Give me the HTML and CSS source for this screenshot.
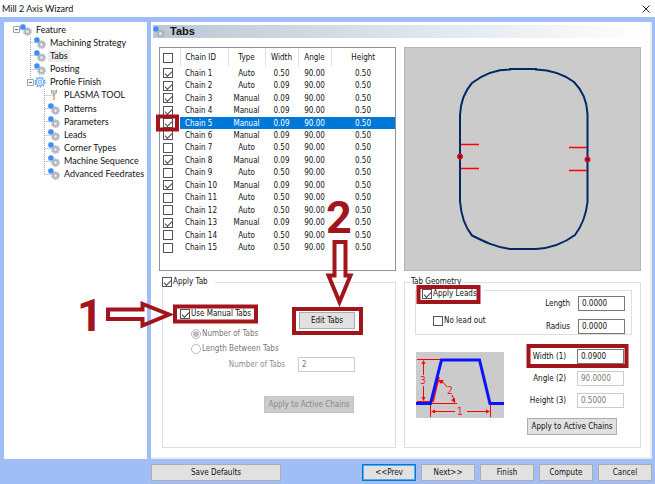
FILE: index.html
```html
<!DOCTYPE html>
<html lang="en">
<head>
<meta charset="utf-8">
<title>Mill 2 Axis Wizard</title>
<link rel="stylesheet" href="styles.css">
</head>
<body>
<svg class="defs" aria-hidden="true">
  <symbol id="gears" viewBox="0 0 12 12">
    <circle cx="7.500" cy="7.600" r="3.700" fill="none" stroke="#b3b7c0" stroke-width="1.400" stroke-dasharray="1.500 .8"/>
    <circle cx="7.500" cy="7.600" r="2.400" fill="#e4e6ec" stroke="#adb1bc" stroke-width="1.700"/>
    <circle cx="2.900" cy="2.900" r="2.700" fill="#3f8cf4"/>
    <circle cx="2.900" cy="2.900" r="2.600" fill="none" stroke="#6aa8fa" stroke-width=".8" stroke-dasharray="1 .8"/>
  </symbol>
  <symbol id="gear" viewBox="0 0 12 12">
    <circle cx="6" cy="6" r="4.900" fill="none" stroke="#5aa2ee" stroke-width="1.400" stroke-dasharray="1.600 1.480"/>
    <circle cx="6" cy="6" r="3.800" fill="#e8f3ff" stroke="#62a8f0" stroke-width="1"/>
    <circle cx="6" cy="6" r="1.600" fill="#fff" stroke="#62a8f0" stroke-width=".9"/>
  </symbol>
  <symbol id="torch" viewBox="0 0 12 12">
    <path d="M3.500 1v2.500L5 5.500h2l1.500-2V1M5 1v3h2V1" fill="none" stroke="#9a9a9a" stroke-width="1"/>
    <path d="M6 5.500V11" stroke="#e9a154" stroke-width="1.600"/>
  </symbol>
</svg>
<header class="titlebar">
  <h1>Mill 2 Axis Wizard</h1>
  <button class="close" aria-label="Close"><svg viewBox="0 0 8 8"><path d="M.5.5l7 7M7.500.5l-7 7" stroke="#222" fill="none"/></svg></button>
</header>
<div class="frame">
  <nav class="tree" aria-label="Steps">
    <svg class="lines" viewBox="0 0 60 158" aria-hidden="true">
      <g fill="none" stroke="#a8a8a8" stroke-dasharray="1 1">
        <path d="M12 6.500h8M22.500 14v46M22.500 19.500h9M22.500 32.500h9M22.500 46.500h9M27 59.500h6M36.500 66v86M36.500 72.500h9M36.500 85.500h9M36.500 98.500h9M36.500 112.500h9M36.500 125.500h9M36.500 138.500h9M36.500 151.500h9"/>
      </g>
      <g fill="#fff" stroke="#a2a2a2"><path d="M5.500 3.500h6v6h-6zM19.500 56.500h6v6h-6z"/></g>
      <path d="M7 6.500h3M21 59.500h3" stroke="#4668a8"/>
    </svg>
    <ul>
      <li class="level-0"><svg><use href="#gears"/></svg><span>Feature</span></li>
      <li class="level-1"><svg><use href="#gears"/></svg><span>Machining Strategy</span></li>
      <li class="level-1"><svg><use href="#gears"/></svg><span class="current">Tabs</span></li>
      <li class="level-1"><svg><use href="#gears"/></svg><span>Posting</span></li>
      <li class="level-1"><svg><use href="#gear"/></svg><span>Profile Finish</span></li>
      <li class="level-2"><svg><use href="#torch"/></svg><span>PLASMA TOOL</span></li>
      <li class="level-2"><svg><use href="#gears"/></svg><span>Patterns</span></li>
      <li class="level-2"><svg><use href="#gears"/></svg><span>Parameters</span></li>
      <li class="level-2"><svg><use href="#gears"/></svg><span>Leads</span></li>
      <li class="level-2"><svg><use href="#gears"/></svg><span>Corner Types</span></li>
      <li class="level-2"><svg><use href="#gears"/></svg><span>Machine Sequence</span></li>
      <li class="level-2"><svg><use href="#gears"/></svg><span>Advanced Feedrates</span></li>
    </ul>
  </nav>
  <main class="page">
    <h2><svg><use href="#gears"/></svg>Tabs</h2>
    <div class="content">
      <div class="list">
        <table>
          <colgroup><col class="c-check"><col class="c-id"><col class="c-type"><col class="c-width"><col class="c-angle"><col></colgroup>
          <thead><tr><th><input type="checkbox" aria-label="Select all"></th><th>Chain ID</th><th>Type</th><th>Width</th><th>Angle</th><th>Height</th></tr></thead>
          <tbody>
            <tr><td><input type="checkbox" aria-label="Chain 1" checked></td><td>Chain 1</td><td>Auto</td><td>0.50</td><td>90.00</td><td>0.50</td></tr>
            <tr><td><input type="checkbox" aria-label="Chain 2" checked></td><td>Chain 2</td><td>Auto</td><td>0.09</td><td>90.00</td><td>0.50</td></tr>
            <tr><td><input type="checkbox" aria-label="Chain 3" checked></td><td>Chain 3</td><td>Manual</td><td>0.09</td><td>90.00</td><td>0.50</td></tr>
            <tr><td><input type="checkbox" aria-label="Chain 4" checked></td><td>Chain 4</td><td>Manual</td><td>0.09</td><td>90.00</td><td>0.50</td></tr>
            <tr class="selected"><td><input type="checkbox" aria-label="Chain 5" checked></td><td>Chain 5</td><td>Manual</td><td>0.09</td><td>90.00</td><td>0.50</td></tr>
            <tr><td><input type="checkbox" aria-label="Chain 6" checked></td><td>Chain 6</td><td>Manual</td><td>0.09</td><td>90.00</td><td>0.50</td></tr>
            <tr><td><input type="checkbox" aria-label="Chain 7"></td><td>Chain 7</td><td>Auto</td><td>0.50</td><td>90.00</td><td>0.50</td></tr>
            <tr><td><input type="checkbox" aria-label="Chain 8" checked></td><td>Chain 8</td><td>Manual</td><td>0.09</td><td>90.00</td><td>0.50</td></tr>
            <tr><td><input type="checkbox" aria-label="Chain 9"></td><td>Chain 9</td><td>Auto</td><td>0.50</td><td>90.00</td><td>0.50</td></tr>
            <tr><td><input type="checkbox" aria-label="Chain 10" checked></td><td>Chain 10</td><td>Manual</td><td>0.09</td><td>90.00</td><td>0.50</td></tr>
            <tr><td><input type="checkbox" aria-label="Chain 11"></td><td>Chain 11</td><td>Auto</td><td>0.50</td><td>90.00</td><td>0.50</td></tr>
            <tr><td><input type="checkbox" aria-label="Chain 12"></td><td>Chain 12</td><td>Auto</td><td>0.50</td><td>90.00</td><td>0.50</td></tr>
            <tr><td><input type="checkbox" aria-label="Chain 13" checked></td><td>Chain 13</td><td>Manual</td><td>0.09</td><td>90.00</td><td>0.50</td></tr>
            <tr><td><input type="checkbox" aria-label="Chain 14"></td><td>Chain 14</td><td>Auto</td><td>0.50</td><td>90.00</td><td>0.50</td></tr>
            <tr><td><input type="checkbox" aria-label="Chain 15"></td><td>Chain 15</td><td>Auto</td><td>0.50</td><td>90.00</td><td>0.50</td></tr>
          </tbody>
        </table>
      </div>
      <div class="preview">
        <svg viewBox="0 0 235 222" role="img" aria-label="Profile with tabs">
          <path d="M55 153V67C55.500 55 60 43 67 35C78 26.500 90 21.500 105 21.500V21H131V21.500C146 22 159 26.500 169 34C177 42 182 54 182.500 66V154C181 168 176 179 170 187C160 194.500 147 200 131 201H105C90 199 78 193 67 187.500C60 179 56 167 55 153Z" fill="none" stroke="#002a66" stroke-width="2"/>
          <path d="M56 96.500h18M56 120.500h18M164 99.500h18M164 122.500h18" stroke="#f00" stroke-width="1.300" fill="none"/>
          <circle cx="55" cy="108.500" r="2.200" fill="#5b1034" stroke="#e0101c" stroke-width="1.600"/>
          <circle cx="182.500" cy="111.500" r="2.200" fill="#5b1034" stroke="#e0101c" stroke-width="1.600"/>
        </svg>
      </div>
      <fieldset class="group apply-tab">
        <legend><label class="check"><input type="checkbox" checked>Apply Tab</label></legend>
        <div class="manual">
          <label class="check"><input type="checkbox" checked>Use Manual Tabs</label>
          <button class="edit">Edit Tabs</button>
        </div>
        <div class="modes">
          <label class="check off"><input type="radio" name="mode" checked disabled>Number of Tabs</label>
          <label class="check off"><input type="radio" name="mode" disabled>Length Between Tabs</label>
        </div>
        <div class="count"><label class="faint" for="count">Number of Tabs</label><input type="text" id="count" value="2" disabled></div>
        <button class="apply" disabled>Apply to Active Chains</button>
      </fieldset>
      <fieldset class="group geometry">
        <legend>Tab Geometry</legend>
        <fieldset class="leads">
          <legend><label class="check"><input type="checkbox" checked>Apply Leads</label></legend>
          <label class="check no-lead"><input type="checkbox">No lead out</label>
          <div class="lead-fields">
            <label for="length">Length</label><input type="text" id="length" value="0.0000">
            <label for="radius">Radius</label><input type="text" id="radius" value="0.0000">
          </div>
        </fieldset>
        <div class="dimensions">
          <svg class="diagram" viewBox="0 0 88 66" role="img" aria-label="Tab dimensions">
            <path d="M0 0h88v66H0z" fill="#cbcbcb"/>
            <g stroke="#f00" fill="none">
              <path d="M1 7.500h25M1 49.500h14M7.500 9v14M7.500 34v14M16 51.500h25M14.500 53v12M74.500 53v12M16 59.500h23M51 59.500h22"/>
              <path d="M17 50l6-25" stroke-width="1.500"/>
              <path d="M24 29q5 2 7 6M36 43l3 7"/>
            </g>
            <path d="M7.500 8l-2 4h4zM7.500 49l-2-4h4zM15 59.500l4-2v4zM74 59.500l-4-2v4zM22 28l6 0-3 4zM39 51l-4-3 4-2z" fill="#f00"/>
            <g class="marks"><text x="4" y="32">3</text><text x="31" y="42">2</text><text x="41" y="63">1</text></g>
            <path d="M0 51.500H14.500L25.500 8H63.500L74 51.500H88" fill="none" stroke="#0a14ff" stroke-width="3"/>
          </svg>
          <div class="fields">
            <label for="width">Width (1)</label><input type="text" id="width" value="0.0900">
            <label for="angle">Angle (2)</label><input type="text" id="angle" value="90.0000" disabled>
            <label for="height">Height (3)</label><input type="text" id="height" value="0.5000" disabled>
            <button class="apply">Apply to Active Chains</button>
          </div>
        </div>
      </fieldset>
    </div>
  </main>
  <footer>
    <button class="save">Save Defaults</button>
    <button class="default">&lt;&lt;Prev</button>
    <button>Next&gt;&gt;</button>
    <button>Finish</button>
    <button>Compute</button>
    <button>Cancel</button>
  </footer>
</div>
<svg class="callouts" width="655" height="484" aria-hidden="true">
  <g fill="none" stroke="#a3151d" stroke-width="4">
    <path d="M158 116.500h19v13h-19zM175 306.500h81v15h-81zM294 309h67v24h-67zM418.500 287h60v15h-60zM528.500 346h98v20h-98z"/>
    <path d="M108 309.500H142.500V304L169 314.500L142.500 325.500V319H108Z"/>
    <path d="M334.500 242H345.500V275.500H350.500L339.500 302L328.500 275.500H334.500Z"/>
  </g>
  <text x="77" y="331">1</text>
  <text x="326" y="233">2</text>
</svg>
</body>
</html>
```
FILE: styles.css
```css
* { box-sizing: border-box; }

body {
  margin: 0;
  min-height: 100vh;
  display: flex;
  flex-direction: column;
  position: relative;
  background: #fff;
  color: #111;
  font: 8px/10px "DejaVu Sans Condensed", "DejaVu Sans", sans-serif;
}

.defs { position: absolute; width: 0; height: 0; }

h1, h2, ul { margin: 0; padding: 0; }

.titlebar {
  display: flex;
  justify-content: space-between;
  align-items: center;
  height: 17px;
  padding: 0 5px 0 2px;
}
h1 { font: 9px/14px Lato, sans-serif; }
.close { width: 8px; height: 8px; padding: 0; border: 0; background: none; }
.close svg { display: block; }

.frame {
  flex: 1;
  display: grid;
  grid-template-columns: 143px 1fr;
  grid-template-rows: 1fr auto;
  gap: 5px 4px;
  padding: 5px 3px 3px 4px;
  background: #a0bdf5;
}

.tree { position: relative; background: #fff; }
.lines { position: absolute; left: 4px; top: 1px; width: 60px; height: 158px; }
.tree ul {
  position: relative;
  display: grid;
  grid-auto-rows: 1fr;
  height: 158px;
  margin-top: 1px;
  list-style: none;
  font: 9px/12px Lato, sans-serif;
}
.tree li { display: flex; align-items: center; gap: 2px; white-space: nowrap; }
.tree li svg { width: 12px; height: 12px; }
.tree span { padding: 0 2px; }
.tree .current { background: #ededed; }
.level-0 { padding-left: 16px; }
.level-1 { padding-left: 30px; }
.level-2 { padding-left: 44px; }

.page {
  background: #fff;
  border-right: 2px solid #ececec;
  border-bottom: 2px solid #ececec;
  padding: 3px 0 0 2px;
}
h2 {
  display: flex;
  align-items: center;
  gap: 5px;
  height: 13px;
  background: linear-gradient(90deg, #bac8d4, #fff);
  font: bold 11px/13px "Liberation Sans", sans-serif;
}
h2 svg { width: 12px; height: 12px; }

.content {
  display: grid;
  grid-template-columns: 1fr 1fr;
  gap: 6px 8px;
  padding: 9px 9px 0 6px;
}

.list { height: 224px; border: 1px solid #8f949b; }
table { width: 100%; height: 206px; table-layout: fixed; border-collapse: collapse; }
.c-check { width: 20px; }
.c-id { width: 48px; }
.c-type { width: 37px; }
.c-width { width: 33px; }
.c-angle { width: 33px; }
th, td { padding: 1px 0 0; font-weight: normal; text-align: center; white-space: nowrap; }
thead tr { height: 19px; }
th + th { border-left: 1px solid #e2e2e2; }
th:nth-child(2), td:nth-child(2) { padding-left: 5px; text-align: left; }
th:first-child, td:first-child { padding: 0 0 0 3px; }
td input, th input { display: block; }
.selected td { background: #0078d7; color: #fff; }
.selected td:first-child { background: #fff; }

.preview { background: #cbcbcb; border: 1px solid #b5b5b5; }
.preview svg { display: block; width: 100%; height: 222px; }

input { margin: 0; font: inherit; color: inherit; }
input[type="checkbox"], input[type="radio"] {
  appearance: none;
  flex: none;
  width: 10px;
  height: 10px;
  border: 1px solid #555;
  background: #fff;
}
input[type="checkbox"]:checked::after {
  content: "";
  display: block;
  width: 6px;
  height: 3px;
  margin: 2px 0 0 1px;
  border: solid #444;
  border-width: 0 0 1px 1px;
  transform: rotate(-45deg);
}
input[type="radio"] { border-color: #bbb; border-radius: 50%; padding: 1px; }
input[type="radio"]:checked::after {
  content: "";
  display: block;
  height: 6px;
  border-radius: 50%;
  background: #bdbdbd;
}
input[type="text"] {
  width: 47px;
  height: 15px;
  padding: 0 3px;
  border: 1px solid #777;
  background: #fff;
}
input[type="text"]:disabled { border-color: #ccc; color: #777; }

.check { display: flex; align-items: center; gap: 1px; white-space: nowrap; }
.off { color: #777; }
.faint { color: #8e8e8e; }

button {
  height: 17px;
  padding: 0;
  border: 1px solid #adadad;
  background: #e1e1e1;
  color: #111;
  font: inherit;
  white-space: nowrap;
}
button:disabled { background: #ccc; border-color: #c2c2c2; color: #888; }

fieldset { min-width: 0; margin: 0; padding: 0; border: 1px solid #dedede; }
legend { padding: 0; }
.group { height: 171px; }

.apply-tab { margin-left: 3px; }
.apply-tab > legend { margin-left: -1px; padding-right: 7px; }
.manual {
  display: flex;
  justify-content: space-between;
  align-items: flex-start;
  padding: 22px 40px 0 17px;
}
.edit { width: 56px; margin-top: 3px; }
.modes { display: grid; gap: 5px; padding-left: 28px; }
.count {
  display: flex;
  justify-content: flex-end;
  align-items: center;
  gap: 13px;
  padding: 3px 40px 0 0;
}
.count input { width: 57px; }
.apply { width: 90px; }
.apply-tab .apply { display: block; margin: 24px 41px 0 auto; }

.geometry > legend { margin-left: 6px; }
.leads {
  display: flex;
  justify-content: space-between;
  height: 54px;
  margin: -6px 8px 0 10px;
}
.leads > legend { margin-left: 6px; padding: 8px 7px 0 0; }
.no-lead { margin: 8px 0 0 17px; }
.lead-fields, .fields { display: grid; align-items: center; justify-items: end; }
.lead-fields {
  grid-template-columns: auto auto;
  gap: 8px;
  margin: -3px 6px 0 0;
  align-content: start;
}
.dimensions {
  display: flex;
  justify-content: space-between;
  align-items: flex-start;
  padding: 14px 16px 0 11px;
}
.diagram { width: 88px; height: 66px; margin-top: 3px; }
.marks { fill: #e8202a; font: 10px "DejaVu Sans Condensed", "DejaVu Sans", sans-serif; }
.fields { grid-template-columns: auto auto; gap: 7px 8px; }
.fields .apply { grid-column: 1 / -1; margin: 3px 7px 0 0; }

footer { grid-column: 2; display: flex; gap: 5px; }
footer button { width: 54px; }
.save { flex: 0 0 130px; margin-right: auto; }
.default { border: 1px solid #0078d7; box-shadow: inset 0 0 0 1px #5aa9e6; }

.callouts { position: absolute; left: 0; top: 0; pointer-events: none; }
.callouts text { fill: #a3151d; font: 700 45px Roboto, sans-serif; }
```
